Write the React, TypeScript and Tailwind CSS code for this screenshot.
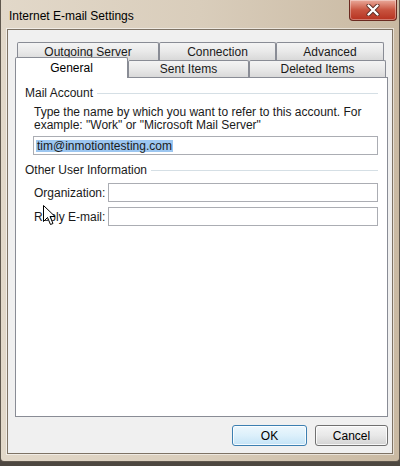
import React from "react";

const font = "font-['Liberation_Sans',Arial,sans-serif]";

function Tab({ label, w, selected = false }: { label: string; w: string; selected?: boolean }) {
  if (selected) {
    return (
      <div
        className={`${w} relative z-10 -mb-px flex h-[21px] items-center justify-center rounded-t-[2px] border border-b-0 border-[#898c95] bg-white text-[12px] text-black`}
      >
        {label}
      </div>
    );
  }
  return (
    <div
      className={`${w} flex h-full items-center justify-center rounded-t-[2px] border border-b-0 border-[#898c95] bg-gradient-to-b from-[#f4f4f4] via-[#e9e9e9] to-[#d9d9d9] text-[12px] text-[#1a1a1a]`}
    >
      {label}
    </div>
  );
}

function TextBox({ children }: { children?: React.ReactNode }) {
  return (
    <div className="flex h-[19px] flex-1 items-center border border-[#abadb3] bg-white pl-[2px]">
      {children}
    </div>
  );
}

function Cursor() {
  return (
    <svg className="absolute left-[43px] top-[205px] z-20" width="13" height="21" viewBox="0 0 13 21">
      <path
        d="M0.5 0.5 L0.5 16.5 L4.5 12.5 L7.5 19.5 L10 18.5 L7 11.5 L12 11.5 Z"
        fill="#ffffff"
        stroke="#000000"
        strokeWidth="1"
        strokeLinejoin="miter"
      />
    </svg>
  );
}

export default function App() {
  return (
    <div className={`relative h-[466px] w-[400px] overflow-hidden bg-[#4d4740] ${font}`}>
      <div className="flex h-[462px] w-[400px] flex-col rounded-b-[4px] border-x border-b border-[#5f574d] bg-gradient-to-r from-[#e2d8c9] via-[#d9cdbb] to-[#c9b9a2]">
        {/* Title bar */}
        <div className="relative flex h-[29px] items-center pl-[8px] pt-[3px] text-[12px] text-black">
          Internet E-mail Settings
          <div className="absolute right-[2px] top-0 flex h-[21px] w-[48px] items-center justify-center rounded-b-[4px] border border-t-0 border-[#6b2a20] bg-gradient-to-b from-[#e9a99b] via-[#c8533f] to-[#b6311f] shadow-[inset_0_0_0_1px_rgba(255,255,255,0.35)]">
            <svg width="14" height="12" viewBox="0 0 14 12">
              <path d="M2.5 1.5 L11.5 10.5 M11.5 1.5 L2.5 10.5" stroke="#5a2a22" strokeWidth="4" strokeLinecap="round" />
              <path d="M2.5 1.5 L11.5 10.5 M11.5 1.5 L2.5 10.5" stroke="#ffffff" strokeWidth="2.4" strokeLinecap="round" />
            </svg>
          </div>
        </div>

        {/* Client area */}
        <div className="mx-[6px] flex h-[425px] flex-col border border-[#7e7365] bg-[#f0f0f0] pl-[7px] pt-[12px] shadow-[0_0_0_1px_rgba(255,255,255,0.55)]">
          {/* Tabs */}
          <div className="flex h-[18px] pl-[2px]">
            <Tab label="Outgoing Server" w="w-[142px]" />
            <Tab label="Connection" w="w-[117px]" />
            <Tab label="Advanced" w="w-[108px]" />
          </div>
          <div className="flex h-[17px] items-end">
            <Tab label="General" w="w-[113px]" selected />
            <Tab label="Sent Items" w="w-[121px]" />
            <Tab label="Deleted Items" w="w-[137px]" />
          </div>

          {/* Panel */}
          <div className="relative flex h-[340px] w-[373px] flex-col border border-[#898c95] bg-white px-[9px] pt-[7px] text-[12px] text-[#1a1a1a]">
            <div className="flex h-[16px] items-center">
              <span>Mail Account</span>
              <div className="ml-[4px] h-px flex-1 bg-[#d5dfe5]" />
            </div>
            <div className="mt-[5px] pl-[9px] leading-[13px]">
              Type the name by which you want to refer to this account. For
              <br />
              example: "Work" or "Microsoft Mail Server"
            </div>
            <div className="mt-[4px] flex pl-[8px]">
              <TextBox>
                <span className="bg-[#9cc6f0] px-px leading-[12px]">tim@inmotiontesting.com</span>
              </TextBox>
            </div>

            <div className="mt-[7px] flex h-[16px] items-center">
              <span>Other User Information</span>
              <div className="ml-[4px] h-px flex-1 bg-[#d5dfe5]" />
            </div>
            <div className="mt-[5px] flex items-center pl-[9px]">
              <span className="w-[74px]">Organization:</span>
              <TextBox />
            </div>
            <div className="mt-[5px] flex items-center pl-[9px]">
              <span className="w-[74px]">Reply E-mail:</span>
              <TextBox />
            </div>
          </div>

          {/* Buttons */}
          <div className="mt-[8px] flex w-[373px] justify-end gap-[8px] text-[12px] text-black">
            <button className="flex h-[21px] w-[75px] items-center justify-center rounded-[3px] border border-[#3c7fb1] bg-gradient-to-b from-[#edf7fd] via-[#dcf0fb] to-[#c4e3f6] shadow-[inset_0_0_0_1px_rgba(255,255,255,0.8)]">
              OK
            </button>
            <button className="flex h-[21px] w-[73px] items-center justify-center rounded-[3px] border border-[#707070] bg-gradient-to-b from-[#f4f4f4] via-[#e8e8e8] to-[#d3d3d3] shadow-[inset_0_0_0_1px_rgba(255,255,255,0.8)]">
              Cancel
            </button>
          </div>
        </div>
      </div>
      <Cursor />
    </div>
  );
}
